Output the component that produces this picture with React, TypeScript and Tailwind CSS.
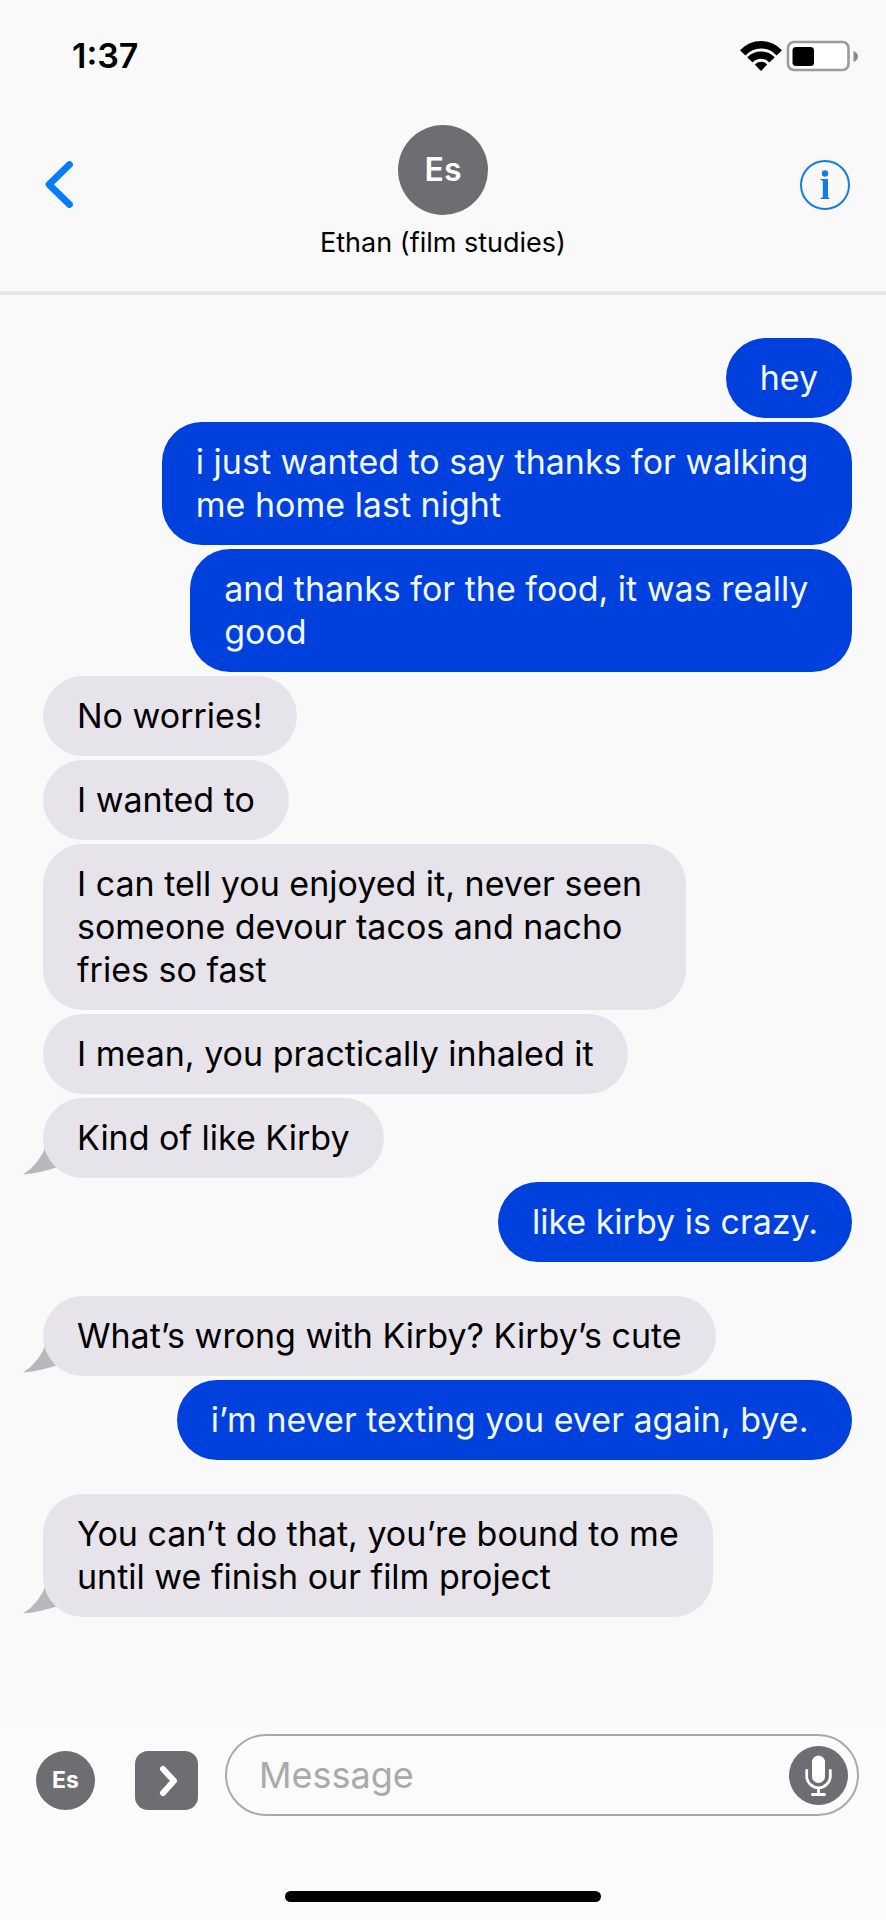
type Message = {
  from: "me" | "them";
  text: string;
  tail?: boolean;
  spaced?: boolean;
};

const messages: Message[] = [
  { from: "me", text: "hey" },
  { from: "me", text: "i just wanted to say thanks for walking\u00a0\nme home last night" },
  { from: "me", text: "and thanks for the food, it was really\u00a0\ngood" },
  { from: "them", text: "No worries!" },
  { from: "them", text: "I wanted to" },
  { from: "them", text: "I can tell you enjoyed it, never seen\u00a0\nsomeone devour tacos and nacho\nfries so fast" },
  { from: "them", text: "I mean, you practically inhaled it" },
  { from: "them", text: "Kind of like Kirby", tail: true },
  { from: "me", text: "like kirby is crazy." },
  { from: "them", text: "What’s wrong with Kirby? Kirby’s cute", tail: true, spaced: true },
  { from: "me", text: "i’m never texting you ever again, bye.\u00a0" },
  { from: "them", text: "You can’t do that, you’re bound to me\nuntil we finish our film project", tail: true, spaced: true },
];

function WifiIcon() {
  return (
    <svg viewBox="0 0 42 30" className="h-[30px] w-[42px]" aria-label="Wi-Fi">
      <path d="M0 9.2Q9 0 21 0T42 9.2L36.6 14.4Q30 7.6 21 7.6T5.4 14.4Z" />
      <path d="M7.2 16.2Q13 10.4 21 10.4T34.8 16.2L29.4 21.4Q26 17.8 21 17.8T12.6 21.4Z" />
      <path d="M14.8 23.6Q17.2 20.8 21 20.8T27.2 23.6L21 30Z" />
    </svg>
  );
}

function BatteryIcon() {
  return (
    <svg viewBox="0 0 72 32" className="h-8 w-[72px]" aria-label="Battery">
      <rect x="2" y="2" width="60.5" height="28" rx="6" fill="#fff" stroke="#9b9b9b" strokeWidth="2.6" />
      <rect x="6.5" y="7" width="21.5" height="19" rx="3.5" />
      <path d="M67.500 11Q72 13 72 16.500T67.500 22Z" fill="#8a8a8a" />
    </svg>
  );
}

function Tail() {
  return (
    <svg viewBox="0 0 40 32" className="absolute bottom-[3px] left-[-20px] h-8 w-10" aria-hidden="true">
      <path d="M24 0Q17 21 0 31.500Q18 30 38 23Z" fill="#b8b7bc" />
    </svg>
  );
}

function Bubble({ message }: { message: Message }) {
  const mine = message.from === "me";
  return (
    <li className={`relative w-fit ${mine ? "self-end" : "self-start"} ${message.spaced ? "mt-[30px]" : ""}`}>
      {message.tail && <Tail />}
      <p
        className={`relative rounded-[40px] px-[34px] pt-[18px] pb-[19px] text-[34px] leading-[43px] whitespace-pre-line ${
          mine ? "bg-[#0040dd] text-[#f0f8ff]" : "bg-[#e6e3ea] text-black"
        }`}
      >
        {message.text}
      </p>
    </li>
  );
}

export default function App() {
  return (
    <div className="flex min-h-screen flex-col bg-[#f9f9f9] font-['Inter','Liberation_Sans',sans-serif] text-black">
      <div className="flex items-center justify-between pt-9 pr-7 pl-[72px]">
        <time className="text-[34px] leading-10 font-semibold">1:37</time>
        <div className="flex items-center gap-1">
          <WifiIcon />
          <BatteryIcon />
        </div>
      </div>

      <header className="grid grid-cols-[1fr_auto_1fr] border-b-4 border-[#e5e4ea] px-9 pt-[49px] pb-8">
        <button type="button" aria-label="Back" className="mt-[34px] h-[52px] w-11 justify-self-start">
          <svg viewBox="0 0 44 52" className="h-[52px] w-11" fill="none" stroke="#057dfb" strokeWidth="6.800" strokeLinecap="round" strokeLinejoin="round">
            <path d="M33.500 5.500L13 25.500L33.500 45.500" />
          </svg>
        </button>
        <div className="flex flex-col items-center gap-3">
          <div className="flex size-[90px] items-center justify-center rounded-full bg-[#6e6d72] text-[32px] font-semibold text-white">
            Es
          </div>
          <h1 className="text-[27px] leading-8">Ethan (film studies)</h1>
        </div>
        <button type="button" aria-label="Contact details" className="mt-[35px] size-[50px] justify-self-end">
          <svg viewBox="0 0 50 50" className="size-[50px]">
            <circle cx="25" cy="25" r="24" fill="none" stroke="#147ce5" strokeWidth="2" />
            <circle cx="25" cy="13.500" r="3.200" fill="#147ce5" />
            <path d="M20.500 19H28V37.200L29.500 38V39H20.500V38L22.800 37.200V20.800L20.500 20Z" fill="#147ce5" />
          </svg>
        </button>
      </header>

      <ul className="flex flex-col gap-1 pt-[43px] pr-[34px] pb-8 pl-[43px]">
        {messages.map((message) => (
          <Bubble key={message.text} message={message} />
        ))}
      </ul>

      <form className="mt-auto flex items-center bg-[#fbfbfb] pt-3 pr-[27px] pl-9" onSubmit={(event) => event.preventDefault()}>
        <div className="mt-[10px] flex size-[59px] shrink-0 items-center justify-center rounded-full bg-[#6e6d72] text-[23px] font-bold text-white">
          Es
        </div>
        <button type="button" aria-label="More apps" className="mt-[10px] ml-10 h-[59px] w-[63px] shrink-0 rounded-[13px] bg-[#6e6d72]">
          <svg viewBox="0 0 63 59" className="h-[59px] w-[63px]" fill="none" stroke="#fff" strokeWidth="6" strokeLinecap="round" strokeLinejoin="round">
            <path d="M28 18L39 29.800L28 42" />
          </svg>
        </button>
        <div className="ml-[27px] flex h-[82px] min-w-0 flex-1 items-center rounded-full border-2 border-[#aaaaaa] pr-[9px] pl-8">
          <input
            type="text"
            aria-label="Message"
            placeholder="Message"
            className="min-w-0 flex-1 bg-transparent text-[36px] outline-none placeholder:text-[#aaaaaa]"
          />
          <button type="button" aria-label="Dictate" className="size-[59px] shrink-0 rounded-full bg-[#6e6d72]">
            <svg viewBox="0 0 59 59" className="size-[59px]" fill="none" stroke="#fff" strokeLinecap="round">
              <rect x="23" y="9.500" width="13" height="27.500" rx="6.500" fill="#fff" stroke="none" />
              <path d="M17.700 24.500V30A11.800 11.800 0 0 0 41.300 30V24.500M29.500 42V48" strokeWidth="2.800" />
              <path d="M23.500 48.500H35.500" strokeWidth="3" />
            </svg>
          </button>
        </div>
      </form>
      <div className="flex justify-center bg-[#fbfbfb] pt-[75px] pb-[18px]">
        <div className="h-[11px] w-[316px] rounded-full bg-black" />
      </div>
    </div>
  );
}
